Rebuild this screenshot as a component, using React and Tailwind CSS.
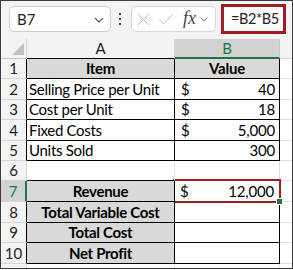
import React from "react";

const rows = [
  { n: 1, h: "h-[20px]", hdr: "border-r-black", a: "bg-[#d9d9d9] border-r-black border-b-black font-bold justify-center", at: "Item", b: "bg-[#d9d9d9] border-r-black border-b-black font-bold justify-center", bt: "Value" },
  { n: 2, h: "h-[21px]", hdr: "border-r-black", a: "border-r-black border-b-black pl-[2px]", at: "Selling Price per Unit", b: "border-r-black border-b-black justify-between pl-[6px] pr-[4px]", d: "$", v: "40" },
  { n: 3, h: "h-[20px]", hdr: "border-r-black", a: "border-r-black border-b-black pl-[2px]", at: "Cost per Unit", b: "border-r-black border-b-black justify-between pl-[6px] pr-[4px]", d: "$", v: "18" },
  { n: 4, h: "h-[21px]", hdr: "border-r-black", a: "border-r-black border-b-black pl-[2px]", at: "Fixed Costs", b: "border-r-black border-b-black justify-between pl-[6px] pr-[4px]", d: "$", v: "5,000" },
  { n: 5, h: "h-[20px]", hdr: "border-r-black", a: "border-r-black border-b-black pl-[2px]", at: "Units Sold", b: "border-r-black border-b-black justify-end pr-[4px]", v: "300" },
  { n: 6, h: "h-[20px]", hdr: "border-r-[#d4d4d4]", a: "border-r-[#e1e1e1] border-b-black", at: "", b: "border-r-[#e1e1e1] border-b-black", bt: "" },
  { n: 7, h: "h-[21px]", hdr: "border-r-black", a: "bg-[#d9d9d9] border-r-black border-b-black font-bold justify-center", at: "Revenue", b: "border-r-black border-b-black justify-between pl-[5px] pr-[5px] relative", d: "$", v: "12,000", sel: true },
  { n: 8, h: "h-[21px]", hdr: "border-r-black", a: "bg-[#d9d9d9] border-r-black border-b-black font-bold justify-center whitespace-nowrap", at: "Total Variable Cost", b: "border-r-black border-b-black", bt: "" },
  { n: 9, h: "h-[20px]", hdr: "border-r-black", a: "bg-[#d9d9d9] border-r-black border-b-black font-bold justify-center", at: "Total Cost", b: "border-r-black border-b-black", bt: "" },
  { n: 10, h: "h-[21px]", hdr: "border-r-black", a: "bg-[#d9d9d9] border-r-black border-b-black font-bold justify-center", at: "Net Profit", b: "border-r-black border-b-black", bt: "" },
];

function Row({ r }) {
  const hdrCls = r.sel
    ? "w-[26px] shrink-0 flex items-center justify-center border-r-2 border-r-[#217346] border-b border-b-[#d4d4d4] bg-[#d2d2d2] text-[#217346]"
    : "w-[26px] shrink-0 flex items-center justify-center border-r border-b border-b-[#d4d4d4] bg-[#f3f3f3] text-[#222] " + r.hdr;
  return (
    <div className={"flex " + r.h}>
      <div className={hdrCls}>{r.n}</div>
      <div className={"w-[148px] shrink-0 flex items-center border-r border-b overflow-visible z-10 tracking-[-0.3px] " + r.a}>
        <span className="whitespace-nowrap">{r.at}</span>
      </div>
      <div className={"w-[105px] shrink-0 flex items-center border-r border-b tracking-[-0.2px] " + r.b}>
        {r.d ? <span>{r.d}</span> : null}
        {r.v ? <span>{r.v}</span> : null}
        {r.bt ? <span>{r.bt}</span> : null}
        {r.sel ? (
          <>
            <div className="absolute -top-[2px] -left-[2px] -right-[2px] -bottom-[2px] border-2 border-[#a11d21]"></div>
            <div className="absolute -right-[4px] -bottom-[4px] w-[5px] h-[5px] bg-[#217346] border border-white box-content"></div>
          </>
        ) : null}
      </div>
      <div className="flex-1 border-b border-b-[#e1e1e1]"></div>
    </div>
  );
}

export default function App() {
  return (
    <div className="w-[293px] h-[269px] border border-[#3c3c3c] bg-white overflow-hidden font-['Lato',sans-serif] text-[15px] leading-none text-black flex flex-col">
      {/* toolbar */}
      <div className="h-[38px] shrink-0 bg-[#f3f3f3] flex items-start">
        <div className="ml-[8px] mt-[5px] w-[102px] h-[26px] bg-white border border-[#cfcfcf] rounded-[5px] flex items-center pl-[7px] pr-[6px] justify-between">
          <span className="text-[#222]">B7</span>
          <svg width="10" height="6" viewBox="0 0 10 6" className="mt-[1px]">
            <polyline points="1,1 5,5 9,1" fill="none" stroke="#555" strokeWidth="1.1" />
          </svg>
        </div>
        <div className="ml-[8px] mt-[12px] flex flex-col gap-[3px]">
          <div className="w-[2px] h-[2px] bg-[#444]"></div>
          <div className="w-[2px] h-[2px] bg-[#444]"></div>
          <div className="w-[2px] h-[2px] bg-[#444]"></div>
        </div>
        <div className="ml-[10px] mt-[5px] w-[85px] h-[26px] bg-white border border-[#d6d6d6] rounded-[5px] flex items-center">
          <svg width="13" height="13" viewBox="0 0 13 13" className="ml-[5px]">
            <line x1="0.5" y1="0.5" x2="12.5" y2="12.5" stroke="#bdbdbd" strokeWidth="1" />
            <line x1="12.5" y1="0.5" x2="0.5" y2="12.5" stroke="#bdbdbd" strokeWidth="1" />
          </svg>
          <svg width="14" height="11" viewBox="0 0 14 11" className="ml-[9px]">
            <polyline points="0.5,5.5 4.5,10 13.5,0.5" fill="none" stroke="#bdbdbd" strokeWidth="1" />
          </svg>
          <span className="ml-[10px] font-['Liberation_Serif',serif] italic text-[18px] text-[#444] leading-none mb-[2px]">fx</span>
          <svg width="8" height="5" viewBox="0 0 8 5" className="ml-[4px]">
            <polyline points="0.5,0.5 4,4 7.5,0.5" fill="none" stroke="#777" strokeWidth="1" />
          </svg>
        </div>
        <div className="ml-[5px] mt-[3px] w-[65px] h-[30px] bg-white border-[3px] border-[#a11d21] flex items-center pl-[7px]">
          <span className="text-[#222] whitespace-nowrap text-[14.5px] tracking-[-0.4px]">=B2*B5</span>
        </div>
      </div>
      {/* column headers */}
      <div className="flex h-[20px] shrink-0 bg-[#f3f3f3]">
        <div className="w-[26px] shrink-0 border-r border-r-[#d4d4d4] border-b border-b-[#c6c6c6] relative">
          <svg width="12" height="12" viewBox="0 0 12 12" className="absolute right-[2px] bottom-[3px]">
            <polygon points="12,0 12,12 0,12" fill="#c2c2c2" />
          </svg>
        </div>
        <div className="w-[148px] shrink-0 border-r border-r-[#d4d4d4] border-b border-b-black flex items-center justify-center text-[#222]">A</div>
        <div className="w-[105px] shrink-0 border-r border-r-[#c6c6c6] border-b-2 border-b-[#217346] bg-[#d2d2d2] flex items-center justify-center text-[#217346]">B</div>
        <div className="flex-1 border-b border-b-[#d4d4d4]"></div>
      </div>
      {rows.map((r) => (
        <Row key={r.n} r={r} />
      ))}
      <div className="flex flex-1">
        <div className="w-[26px] shrink-0 border-r border-r-[#d4d4d4] bg-[#f3f3f3]"></div>
        <div className="w-[148px] shrink-0 border-r border-r-[#e1e1e1]"></div>
        <div className="w-[105px] shrink-0 border-r border-r-[#e1e1e1]"></div>
        <div className="flex-1"></div>
      </div>
    </div>
  );
}
